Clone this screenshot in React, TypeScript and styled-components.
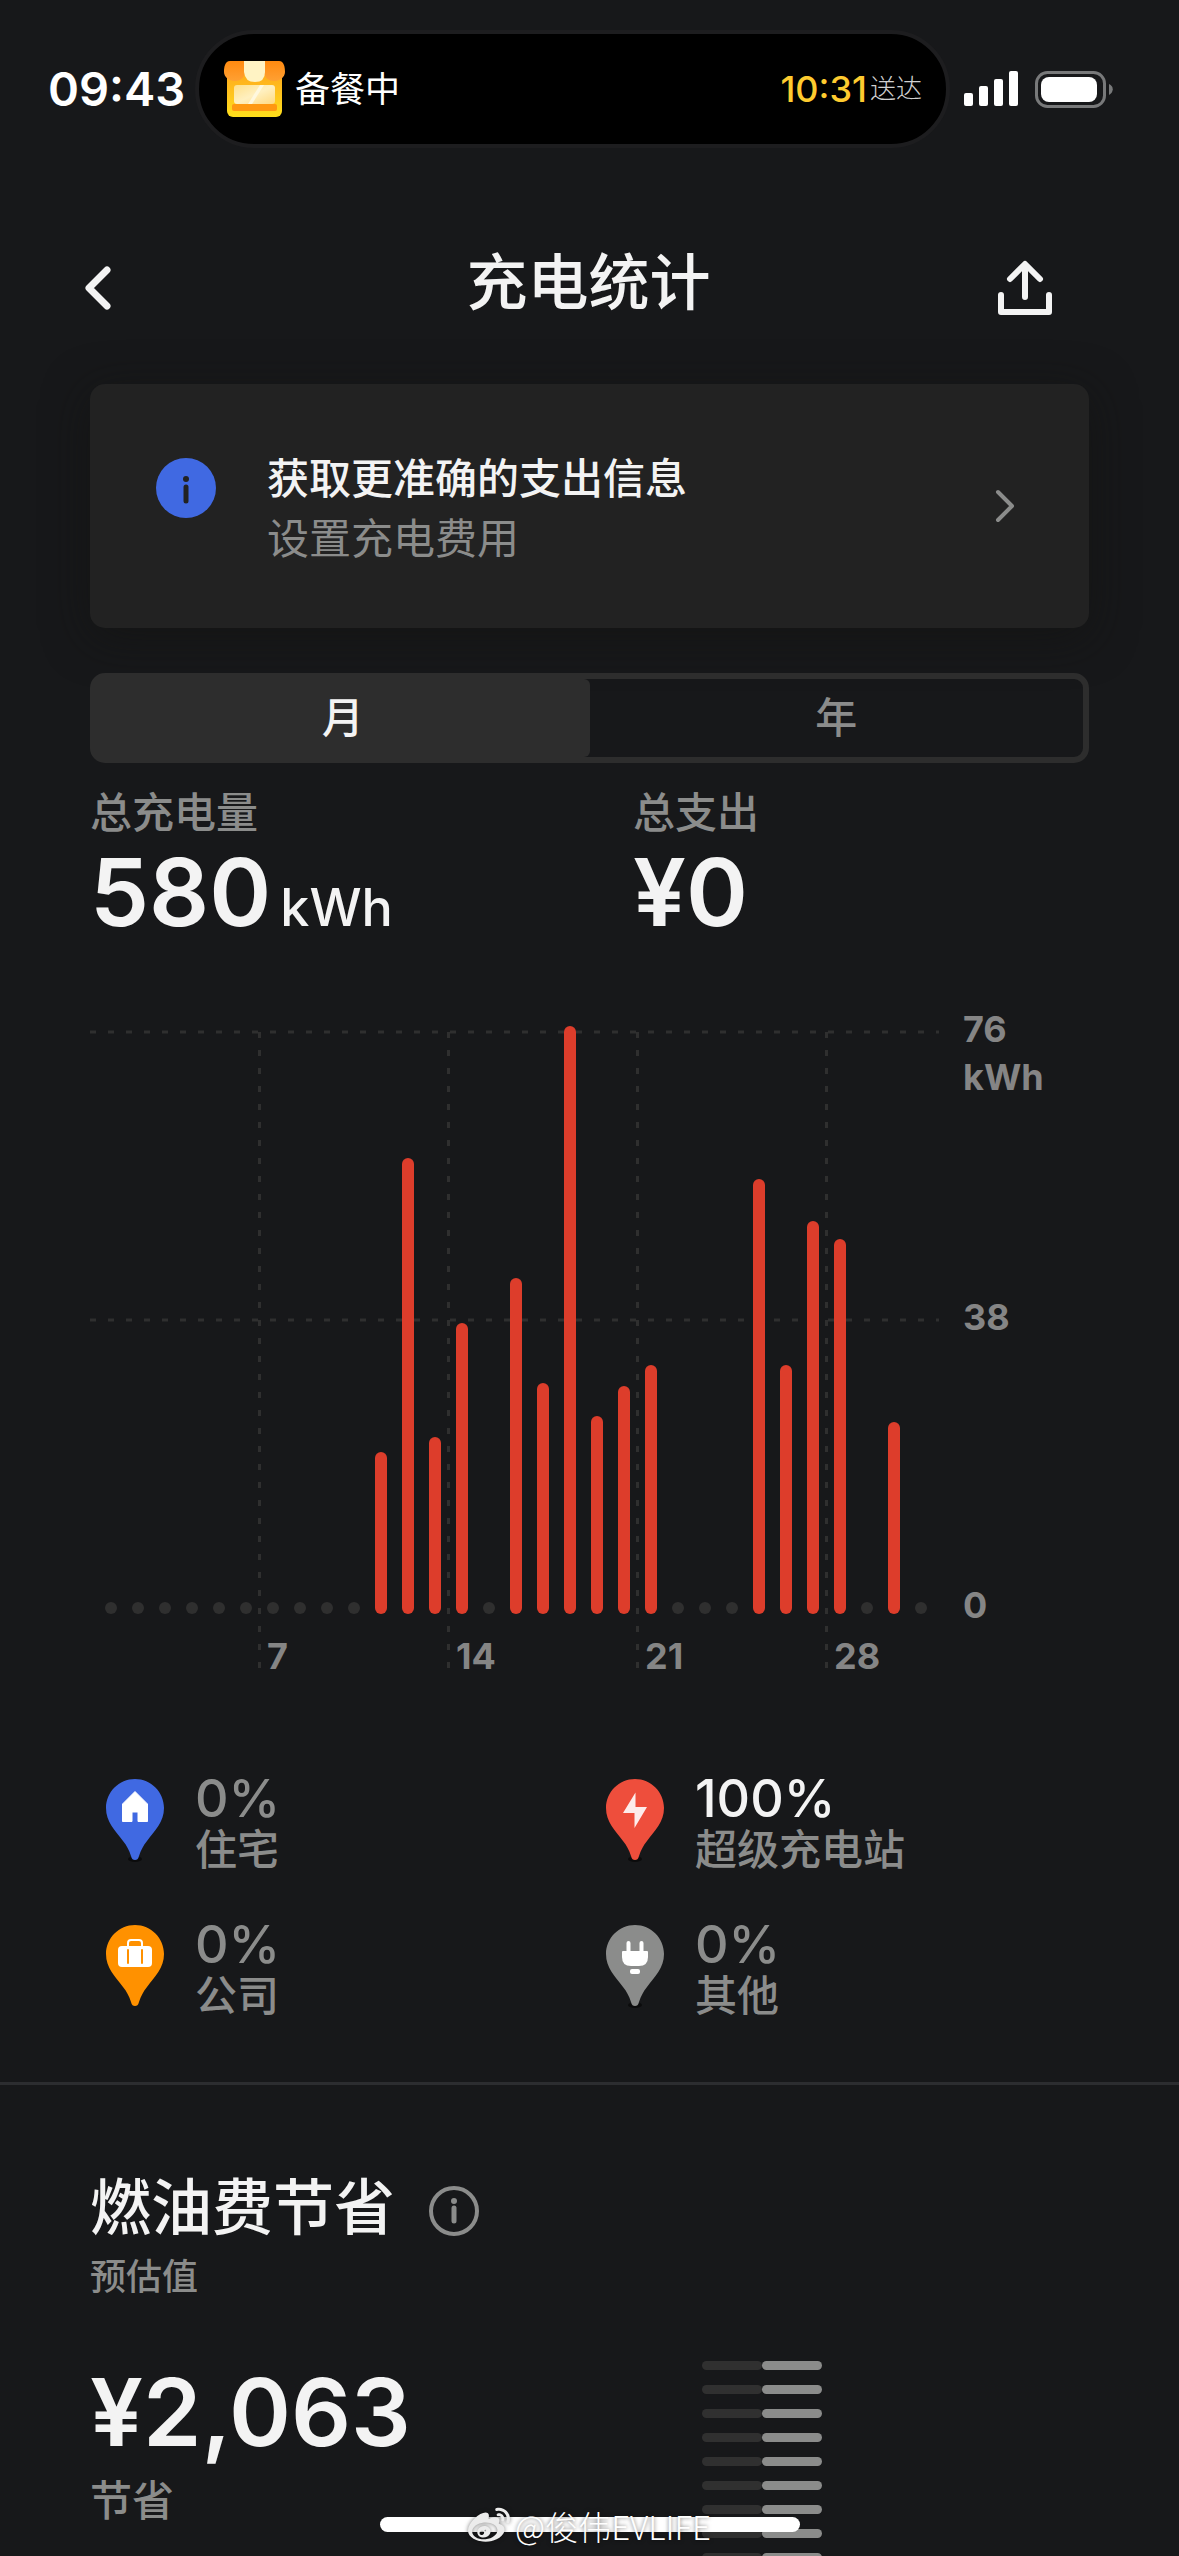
import React from "react";
import styled, { createGlobalStyle } from "styled-components";
import { FaWeibo } from "react-icons/fa";

const ink = "#f3f3f3";
const muted = "#8b8c8b";
const bg = "#17181a";
const track = "#2d2d2d";
const red = "#dd3d2b";

const Global = createGlobalStyle`
  *, *::before, *::after { box-sizing: border-box; }
  html { background: ${bg}; }
  body {
    margin: 0;
    height: 100vh;
    overflow: hidden;
    background: ${bg};
    color: ${ink};
    font-family: Inter, "Noto Sans CJK SC", sans-serif;
  }
  h1, h2, p, dl, dd, dt, ul { margin: 0; padding: 0; font-weight: inherit; }
  button { font: inherit; color: inherit; background: none; border: 0; padding: 0; cursor: pointer; }
  svg { display: block; }
`;

const Screen = styled.div`
  position: relative;
  height: 100vh;
  overflow: hidden;
  display: flex;
  flex-direction: column;
`;

/* ---------- status bar ---------- */
const StatusBar = styled.header`
  display: flex;
  align-items: center;
  flex: none;
  height: 178px;
  padding: 0 66px 0 48px;
`;
const Clock = styled.time`
  width: 147px;
  font-size: 47px;
  font-weight: 600;
  line-height: 60px;
  color: #fff;
`;
const Island = styled.div`
  flex: 1;
  display: flex;
  align-items: center;
  height: 118px;
  padding: 0 24px;
  border: 4px solid #1d1d1f;
  border-radius: 59px;
  background: #000;
`;
const IslandText = styled.span`
  margin-left: 9px;
  font-size: 35px;
  font-weight: 400;
  line-height: 48px;
  color: #fff;
`;
const Eta = styled.span`
  display: flex;
  align-items: center;
  gap: 3px;
  margin-left: auto;
  font-size: 36px;
  font-weight: 500;
  line-height: 48px;
  color: #fecb2f;
`;
const EtaNote = styled.small`
  font-size: 26px;
  font-weight: 300;
  color: #d0d0d0;
`;
const Indicators = styled.div`
  display: flex;
  align-items: center;
  gap: 17px;
  margin-left: 14px;
`;

/* ---------- navigation ---------- */
const NavBar = styled.nav`
  display: grid;
  grid-template-columns: 66px 1fr 66px;
  align-items: center;
  flex: none;
  height: 206px;
  padding: 14px 120px 0 78px;
`;
const NavTitle = styled.h1`
  padding-left: 40px;
  padding-bottom: 10px;
  font-size: 61px;
  font-weight: 500;
  line-height: 72px;
  text-align: center;
`;
const IconButton = styled.button<{ $end?: boolean }>`
  display: flex;
  align-items: center;
  justify-content: ${(p) => (p.$end ? "flex-end" : "flex-start")};
  height: 66px;
`;

/* ---------- charging statistics ---------- */
const Section = styled.section`
  display: flex;
  flex-direction: column;
  flex: none;
  padding: 0 90px;
`;
const Notice = styled.button`
  display: flex;
  align-items: center;
  height: 244px;
  padding: 0 72px 0 66px;
  border-radius: 15px;
  background: #222222;
  box-shadow: 0 9px 45px rgba(18, 18, 16, 0.6);
  text-align: left;
`;
const NoticeIcon = styled.span`
  align-self: flex-start;
  margin: 74px 51px 0 0;
`;
const NoticeBody = styled.span`
  flex: 1;
  display: flex;
  flex-direction: column;
  padding-top: 6px;
`;
const Line = styled.span<{ $strong?: boolean }>`
  font-size: 42px;
  line-height: 60px;
  font-weight: ${(p) => (p.$strong ? 500 : 400)};
  color: ${(p) => (p.$strong ? ink : muted)};
`;
const Segmented = styled.div`
  display: grid;
  grid-template-columns: 1fr 1fr;
  height: 90px;
  margin-top: 45px;
  border: 6px solid ${track};
  border-radius: 15px;
`;
const Segment = styled.button<{ $active?: boolean }>`
  font-size: 42px;
  font-weight: 500;
  line-height: 60px;
  color: ${(p) => (p.$active ? ink : muted)};
  background: ${(p) => (p.$active ? track : "transparent")};
  border-radius: 0 6px 6px 0;
`;
const Totals = styled.dl`
  display: grid;
  grid-template-columns: 543px 1fr;
  margin-top: 20px;
`;
const Label = styled.dt`
  font-size: 42px;
  font-weight: 500;
  line-height: 60px;
  color: ${muted};
`;
const Amount = styled.dd`
  font-size: 94px;
  font-weight: 600;
  line-height: 99px;
`;
const Unit = styled.span`
  margin-left: 9px;
  font-size: 52px;
  font-weight: 500;
  line-height: 52px;
`;

/* ---------- chart ---------- */
const Chart = styled.figure`
  display: grid;
  grid-template-columns: minmax(0, 850px) 1fr;
  column-gap: 23px;
  margin: 63px 0 0;
`;
const Axis = styled.div`
  display: flex;
  flex-direction: column;
  font-size: 36px;
  font-weight: 700;
  line-height: 48px;
  color: #858585;
`;
const Tick = styled.span`
  flex: none;
  height: 288px;
  white-space: pre-line;

  &:last-child { height: 48px; }
`;

/* ---------- charger mix ---------- */
const Mix = styled.ul`
  display: grid;
  grid-template-columns: 500px 1fr;
  row-gap: 44px;
  margin-top: 102px;
  padding-left: 15px;
  list-style: none;
`;
const MixItem = styled.li`
  display: flex;
  gap: 30px;
`;
const MixText = styled.div`
  display: flex;
  flex-direction: column;
`;
const Percent = styled.span<{ $on: boolean }>`
  font-size: 52px;
  font-weight: 500;
  line-height: 40px;
  color: ${(p) => (p.$on ? ink : muted)};
`;
const Place = styled.span`
  font-size: 42px;
  font-weight: 500;
  line-height: 62px;
  color: ${muted};
`;

/* ---------- fuel savings ---------- */
const Divider = styled.hr`
  flex: none;
  align-self: stretch;
  height: 3px;
  margin: 55px 0 87px;
  border: 0;
  background: #2c2d30;
`;
const SavingsHead = styled.div`
  display: flex;
  align-items: flex-end;
  gap: 34px;
`;
const SavingsTitle = styled.h2`
  font-size: 61px;
  font-weight: 500;
  line-height: 72px;
`;
const Estimate = styled.p`
  font-size: 36px;
  font-weight: 500;
  line-height: 48px;
  margin-top: 9px;
  color: ${muted};
`;
const SavingsRow = styled.div`
  display: grid;
  grid-template-columns: 612px 1fr;
  margin-top: 60px;
`;
const SavingsFigure = styled.dl`
  display: flex;
  flex-direction: column-reverse;
  align-self: start;
  gap: 9px;
  padding-top: 2px;
`;
const Gauge = styled.div`
  display: grid;
  grid-template-columns: 60px 60px;
  row-gap: 15px;
`;
const Pill = styled.i<{ $lit?: boolean }>`
  height: 9px;
  border-radius: 5px;
  background: ${(p) => (p.$lit ? muted : "#303030")};
`;

/* ---------- overlays ---------- */
const HomeIndicator = styled.div`
  position: absolute;
  left: 50%;
  bottom: 24px;
  width: 420px;
  height: 15px;
  margin-left: -210px;
  border-radius: 8px;
  background: #fff;
`;
const Watermark = styled.div`
  position: absolute;
  left: 0;
  right: 0;
  bottom: 6px;
  display: flex;
  align-items: center;
  justify-content: center;
  gap: 5px;
  font-family: "Noto Sans CJK SC", sans-serif;
  font-size: 33px;
  font-weight: 300;
  line-height: 48px;
  color: #fff;
  text-shadow: 0 0 4px rgba(0, 0, 0, 0.6);
  svg {
    color: #ececec;
    filter: drop-shadow(0 0 2px rgba(0, 0, 0, 0.5));
  }
`;

const usage: Record<number, number> = {
  11: 19.8, 12: 58.6, 13: 21.8, 14: 36.8, 16: 42.8, 17: 28.9, 18: 76, 19: 24.5,
  20: 28.5, 21: 31.3, 25: 55.8, 26: 31.3, 27: 50.3, 28: 47.9, 30: 23.8,
};
const days = Array.from({ length: 31 }, (_, i) => i + 1);

function UsageChart() {
  return (
    <svg viewBox="0 0 850 672" width="100%" role="img" aria-label="每日充电量">
      <g stroke="#2f2f2f" strokeWidth="3" fill="none">
        {[27, 315].map((y) => (
          <path key={y} d={`M0 ${y}H849`} strokeDasharray="6 12" />
        ))}
        {[1, 2, 3, 4].map((w) => (
          <path key={w} d={`M${w * 189 - 19.5} 27V664`} strokeDasharray="6 12" />
        ))}
      </g>
      {days.map((d) => {
        const v = usage[d];
        const x = 27 * d - 12;
        const h = v ? 12 + Math.round((v * 576) / 76) : 12;
        return <rect key={d} x={x} y={609 - h} width="12" height={h} rx="6" fill={v ? red : "#2f2f2f"} />;
      })}
      <g fill="#858585" fontSize="36" fontWeight="700">
        {[1, 2, 3, 4].map((w) => (
          <text key={w} x={w * 189 - 12} y="664">{w * 7}</text>
        ))}
      </g>
    </svg>
  );
}

function Pin({ color, shadow = true, children }: { color: string; shadow?: boolean; children: React.ReactNode }) {
  return (
    <svg width="60" height="86" viewBox="0 0 60 86" aria-hidden="true">
      {shadow && <ellipse cx="30" cy="80" rx="7" ry="3" fill="#0b0b0c" />}
      <path
        d="M30 0C46 0 59 13 59 29c0 14-9 22-17 33-4 5-6 9-8 15-.8 3-2 4-4 4s-3.200-1-4-4c-2-6-4-10-8-15C10 51 1 43 1 29 1 13 14 0 30 0Z"
        fill={color}
      />
      {children}
    </svg>
  );
}

const chargers = [
  {
    name: "住宅", pct: 0,
    pin: <Pin color="#4069e2"><path d="M30 12.500 42.500 25V42.500H33V33H27V42.500H17.500V25Z" fill="#fff" stroke="#fff" strokeWidth="1" strokeLinejoin="round" /></Pin>,
  },
  {
    name: "超级充电站", pct: 100,
    pin: <Pin color="#ee4e3c"><path d="M30.500 13.500V28H42L29.500 49V34H18Z" fill="#fdeceb" /></Pin>,
  },
  {
    name: "公司", pct: 0,
    pin: (
      <Pin color="#ff9100" shadow={false}>
        <rect x="13" y="21" width="34" height="21" rx="4" fill="#fff" />
        <path d="M23 22V18q0-3 3-3h8q3 0 3 3v4" fill="none" stroke="#fff" strokeWidth="2" />
        <path d="M23 25V38M37 25V38" stroke="#ff9100" strokeWidth="2" strokeLinecap="round" />
      </Pin>
    ),
  },
  {
    name: "其他", pct: 0,
    pin: (
      <Pin color={muted}>
        <path d="M23.500 18V27M36.500 18V27" stroke="#fff" strokeWidth="4" strokeLinecap="round" />
        <path d="M18 26H42Q43 26 43 27V32Q43 41 34 41H26Q17 41 17 32V27Q17 26 18 26Z" fill="#fff" />
        <rect x="25" y="44" width="10" height="5" rx="2" fill="#fff" />
      </Pin>
    ),
  },
];

function ShopIcon() {
  return (
    <svg width="63" height="58" viewBox="0 0 63 58" aria-hidden="true">
      <defs>
        <linearGradient id="body" x1="0" y1="0" x2="0" y2="1">
          <stop offset="0" stopColor="#ffa51e" /><stop offset="1" stopColor="#ffdf1c" />
        </linearGradient>
        <linearGradient id="roof" x1="0" y1="0" x2="0" y2="1">
          <stop offset="0" stopColor="#ff8a10" /><stop offset="1" stopColor="#ffa033" />
        </linearGradient>
        <linearGradient id="pane" x1="0" y1="0" x2="1" y2="1">
          <stop offset="0" stopColor="#ffe08a" /><stop offset=".5" stopColor="#fff0c0" /><stop offset="1" stopColor="#ffda80" />
        </linearGradient>
      </defs>
      <rect x="4" y="8" width="55" height="49" rx="6" fill="url(#body)" />
      <path d="M7 1H22V13C21 18 17 21 12 21 6 21 1 17 1 12 1 7 2 1 7 1ZM56 1H41V13C42 18 46 21 51 21 57 21 62 17 62 12 62 7 61 1 56 1Z" fill="url(#roof)" />
      <path d="M21 1H42V12q0 10-10 10T21 12Z" fill="#fff3c4" />
      <rect x="11" y="25" width="41" height="19" rx="3" fill="url(#pane)" />
      <path d="M25 44 37 25H41L29 44Z" fill="#fff8de" />
      <rect x="9" y="44" width="45" height="7" rx="2" fill="#ff9812" />
    </svg>
  );
}

export default function App() {
  return (
    <>
      <Global />
      <Screen>
        <StatusBar>
          <Clock>09:43</Clock>
          <Island>
            <ShopIcon />
            <IslandText>备餐中</IslandText>
            <Eta>10:31<EtaNote>送达</EtaNote></Eta>
          </Island>
          <Indicators>
            <svg width="54" height="36" viewBox="0 0 54 36" fill="#fff" aria-hidden="true">
              <rect x="0" y="22" width="9" height="13" rx="2" />
              <rect x="15" y="15" width="9" height="20" rx="2" />
              <rect x="30" y="8" width="9" height="27" rx="2" />
              <rect x="45" y="0" width="9" height="35" rx="2" />
            </svg>
            <svg width="78" height="37" viewBox="0 0 78 37" aria-hidden="true">
              <rect x="1.500" y="1.500" width="68" height="34" rx="11" fill="none" stroke="#78797a" strokeWidth="3" />
              <rect x="6" y="6" width="56" height="25" rx="8" fill="#fff" />
              <path d="M74 13c5 2 5 8 0 11Z" fill="#78797a" />
            </svg>
          </Indicators>
        </StatusBar>

        <NavBar>
          <IconButton aria-label="返回">
            <svg width="42" height="48" viewBox="0 0 42 48" fill="none" stroke={ink} strokeWidth="7" strokeLinecap="round" strokeLinejoin="round" aria-hidden="true">
              <path d="M29 6 11 24 29 42" />
            </svg>
          </IconButton>
          <NavTitle>充电统计</NavTitle>
          <IconButton $end aria-label="分享">
            <svg width="66" height="60" viewBox="0 0 66 60" fill="none" stroke={ink} strokeWidth="6" strokeLinecap="round" strokeLinejoin="round" aria-hidden="true">
              <path d="M8 37V54H56V37M32 39V7M17 21 32 6 47 21" />
            </svg>
          </IconButton>
        </NavBar>

        <Section>
          <Notice>
            <NoticeIcon>
              <svg width="60" height="60" viewBox="0 0 60 60" aria-hidden="true">
                <circle cx="30" cy="30" r="30" fill="#4069e2" />
                <circle cx="30" cy="21" r="3" fill="#222" />
                <path d="M30 29V43" stroke="#222" strokeWidth="5" strokeLinecap="round" />
              </svg>
            </NoticeIcon>
            <NoticeBody>
              <Line $strong>获取更准确的支出信息</Line>
              <Line>设置充电费用</Line>
            </NoticeBody>
            <svg width="24" height="36" viewBox="0 0 24 36" fill="none" stroke={muted} strokeWidth="4" strokeLinecap="round" strokeLinejoin="round" aria-hidden="true">
              <path d="M5 4 19 18 5 32" />
            </svg>
          </Notice>

          <Segmented>
            <Segment $active aria-pressed="true">月</Segment>
            <Segment aria-pressed="false">年</Segment>
          </Segmented>

          <Totals>
            <div>
              <Label>总充电量</Label>
              <Amount>580<Unit>kWh</Unit></Amount>
            </div>
            <div>
              <Label>总支出</Label>
              <Amount>¥0</Amount>
            </div>
          </Totals>

          <Chart>
            <UsageChart />
            <Axis>
              <Tick>{"76\nkWh"}</Tick>
              <Tick>38</Tick>
              <Tick>0</Tick>
            </Axis>
          </Chart>

          <Mix>
            {chargers.map((c) => (
              <MixItem key={c.name}>
                {c.pin}
                <MixText>
                  <Percent $on={c.pct > 0}>{`${c.pct}%`}</Percent>
                  <Place>{c.name}</Place>
                </MixText>
              </MixItem>
            ))}
          </Mix>
        </Section>

        <Divider />

        <Section>
          <SavingsHead>
            <SavingsTitle>燃油费节省</SavingsTitle>
            <IconButton aria-label="说明">
              <svg width="50" height="50" viewBox="0 0 50 50" fill="none" stroke={muted} aria-hidden="true">
                <circle cx="25" cy="25" r="23" strokeWidth="4" />
                <path d="M25 22V35" strokeWidth="5" strokeLinecap="round" />
                <circle cx="25" cy="15" r="3" fill={muted} stroke="none" />
              </svg>
            </IconButton>
          </SavingsHead>
          <Estimate>预估值</Estimate>
          <SavingsRow>
            <SavingsFigure>
              <Label>节省</Label>
              <Amount>¥2,063</Amount>
            </SavingsFigure>
            <Gauge>
              {Array.from({ length: 12 }, (_, i) => (
                <React.Fragment key={i}>
                  <Pill />
                  <Pill $lit />
                </React.Fragment>
              ))}
            </Gauge>
          </SavingsRow>
        </Section>

        <HomeIndicator />
        <Watermark>
          <FaWeibo size={42} />
          <span>@俊伟EVLIFE</span>
        </Watermark>
      </Screen>
    </>
  );
}
